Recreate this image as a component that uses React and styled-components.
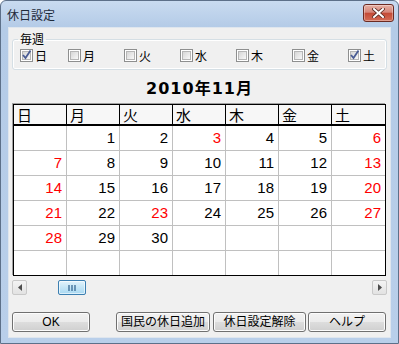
import React from 'react';
import styled, { createGlobalStyle } from 'styled-components';

const GlobalStyle = createGlobalStyle`
  html, body {
    margin: 0;
    padding: 0;
    background: #ffffff;
  }
  body {
    font-family: "Noto Sans CJK JP", sans-serif;
  }
`;

const Window = styled.div`
  box-sizing: border-box;
  width: 399px;
  height: 344px;
  display: flex;
  flex-direction: column;
  border: 1px solid #5d7089;
  border-radius: 6px 6px 0 0;
  background: linear-gradient(#c9dbf0, #b4cbe7 26px, #b9cfea);
  padding: 0 7px 5px 7px;
`;

const TitleBar = styled.div`
  height: 26px;
  margin: 0 -7px;
  padding: 3px 4px 0 6px;
  box-sizing: border-box;
  display: flex;
  justify-content: space-between;
  align-items: flex-start;
`;

const TitleText = styled.span`
  font-size: 12px;
  line-height: 16px;
  margin-top: 3px;
  color: #1e2a3a;
`;

const CloseButton = styled.div`
  width: 31px;
  height: 18px;
  box-sizing: border-box;
  border: 1px solid #6b2a22;
  border-radius: 3px;
  background: linear-gradient(#e6b0a3, #d6867a 45%, #c44a36 52%, #d46d57);
  box-shadow: inset 0 0 0 1px rgba(255, 255, 255, 0.35);
  display: flex;
  align-items: center;
  justify-content: center;
`;

const Client = styled.div`
  flex: 1;
  min-width: 0;
  display: flex;
  flex-direction: column;
  background: #f0f0f0;
  box-shadow: inset 0 0 0 1px #dfe6ee;
`;

const GroupBox = styled.fieldset`
  min-width: 0;
  margin: 5px 4px 0 4px;
  padding: 2px 0 6px 7px;
  border: 1px solid #d5dfe5;
  border-radius: 3px;
  box-shadow: inset 0 0 0 1px #ffffff;
`;

const GroupLabel = styled.legend`
  font-size: 12px;
  line-height: 14px;
  padding: 0 2px;
  margin-left: -2px;
  color: #000;
`;

const CheckRow = styled.div`
  display: flex;
  height: 15px;
  align-items: center;
`;

const CheckItem = styled.label`
  width: ${p => (p.$w ? `${p.$w}px` : 'auto')};
  display: flex;
  align-items: center;
  gap: 2px;
  font-size: 12px;
  line-height: 15px;
  color: #000;
`;

const Box = styled.span`
  width: 13px;
  height: 13px;
  box-sizing: border-box;
  border: 1px solid #8e8f8f;
  padding: 1px;
  background: #fff;
  display: flex;
`;

const BoxInner = styled.span`
  flex: 1;
  border: 1px solid #b6b6b6;
  background: linear-gradient(135deg, #d6d6d6, #f8f8f8);
  position: relative;
`;

const Tick = styled.svg`
  position: absolute;
  left: -2px;
  top: -3px;
`;

const MonthTitle = styled.div`
  margin-top: 9px;
  text-align: center;
  font-family: "DejaVu Sans", "Noto Sans CJK JP", sans-serif;
  font-weight: bold;
  font-size: 16px;
  line-height: 20px;
  letter-spacing: 1px;
  color: #000;
`;

const Grid = styled.div`
  margin: 5px 0 0 5px;
  width: 373px;
  box-sizing: border-box;
  border: 1px solid #000;
  box-shadow: -1px -1px 0 #a0a0a0;
  background: #fff;
  display: grid;
  grid-template-columns: repeat(6, 53px) 1fr;
`;

const HeadCell = styled.div`
  height: 21px;
  box-sizing: border-box;
  border-right: ${p => (p.$last ? 'none' : '1px solid #000')};
  border-bottom: 2px solid #000;
  background: #f7f7f7;
  padding-left: 3px;
  font-size: 15px;
  line-height: 19px;
  color: #000;
`;

const DayCell = styled.div`
  height: ${p => (p.$lastRow ? 24 : 25)}px;
  box-sizing: border-box;
  border-right: ${p => (p.$last ? 'none' : '1px solid #c0c0c0')};
  border-bottom: ${p => (p.$lastRow ? 'none' : '1px solid #c0c0c0')};
  text-align: right;
  padding-right: 4px;
  font-family: "Liberation Sans", sans-serif;
  font-size: 15px;
  line-height: 24px;
  color: ${p => (p.$red ? '#ff0000' : '#000')};
`;

const ScrollBar = styled.div`
  margin: 4px 0 0 4px;
  width: 375px;
  height: 15px;
  display: flex;
`;

const ArrowButton = styled.div`
  width: 15px;
  height: 15px;
  box-sizing: border-box;
  border: 1px solid #c9c9c9;
  border-radius: 2px;
  background: linear-gradient(#f4f4f4, #e2e2e2);
  display: flex;
  align-items: center;
  justify-content: center;
`;

const Track = styled.div`
  flex: 1;
  display: flex;
`;

const Thumb = styled.div`
  width: 28px;
  height: 15px;
  margin-left: ${p => p.$offset}px;
  box-sizing: border-box;
  border: 1px solid #3c7fb1;
  border-radius: 2px;
  background: linear-gradient(#e3f4fc, #c4e5f6 50%, #a9d9f2);
  box-shadow: inset 0 0 0 1px rgba(255, 255, 255, 0.6);
  display: flex;
  align-items: center;
  justify-content: center;
`;

const Footer = styled.div`
  margin: 17px 0 0 4px;
  display: flex;
`;

const Button = styled.button`
  width: ${p => p.$w}px;
  height: 20px;
  margin-left: ${p => p.$gap || 0}px;
  padding: 0;
  box-sizing: border-box;
  border: 1px solid #707070;
  border-radius: 3px;
  background: linear-gradient(#f2f2f2, #ebebeb 48%, #dddddd 52%, #cfcfcf);
  box-shadow: inset 0 0 0 1px #fcfcfc;
  font-family: "Liberation Sans", "Noto Sans CJK JP", sans-serif;
  font-size: 12px;
  line-height: 18px;
  color: #000;
`;

const weekdays = ['日', '月', '火', '水', '木', '金', '土'];
const checked = [true, false, false, false, false, false, true];
const holidays = [3, 23];

const cells = Array.from({ length: 42 }, (_, i) => (i >= 1 && i <= 30 ? i : null));

const Check = ({ on }) => (
  <Box>
    <BoxInner>
      {on && (
        <Tick width="11" height="11" viewBox="0 0 11 11">
          <path d="M2 6 L4.5 9 L9.5 1.5" fill="none" stroke="#4a5c94" strokeWidth="1.8" />
        </Tick>
      )}
    </BoxInner>
  </Box>
);

export default function App() {
  return (
    <>
      <GlobalStyle />
      <Window>
        <TitleBar>
          <TitleText>休日設定</TitleText>
          <CloseButton>
            <svg width="13" height="10" viewBox="0 0 13 10">
              <path d="M2 1 L11 9 M11 1 L2 9" stroke="#5a2a22" strokeWidth="3.6" strokeLinecap="square" />
              <path d="M2 1 L11 9 M11 1 L2 9" stroke="#ffffff" strokeWidth="2" strokeLinecap="square" />
            </svg>
          </CloseButton>
        </TitleBar>
        <Client>
          <GroupBox>
            <GroupLabel>毎週</GroupLabel>
            <CheckRow>
              {weekdays.map((d, i) => (
                <CheckItem key={d} $w={i === 0 ? 48 : i === 6 ? null : 56}>
                  <Check on={checked[i]} />
                  {d}
                </CheckItem>
              ))}
            </CheckRow>
          </GroupBox>
          <MonthTitle>2010年11月</MonthTitle>
          <Grid>
            {weekdays.map((d, i) => (
              <HeadCell key={d} $last={i === 6}>{d}</HeadCell>
            ))}
            {cells.map((day, i) => {
              const col = i % 7;
              const red = col === 0 || col === 6 || holidays.includes(day);
              return (
                <DayCell key={i} $last={col === 6} $lastRow={i >= 35} $red={red}>
                  {day || ''}
                </DayCell>
              );
            })}
          </Grid>
          <ScrollBar>
            <ArrowButton>
              <svg width="4" height="7" viewBox="0 0 4 7">
                <path d="M4 0 L0 3.5 L4 7 Z" fill="#4d4d4d" />
              </svg>
            </ArrowButton>
            <Track>
              <Thumb $offset={31}>
                <svg width="9" height="6" viewBox="0 0 9 6">
                  <path d="M1 0 V6 M4 0 V6 M7 0 V6" stroke="#2c5e8a" strokeWidth="1.2" />
                </svg>
              </Thumb>
            </Track>
            <ArrowButton>
              <svg width="4" height="7" viewBox="0 0 4 7">
                <path d="M0 0 L4 3.5 L0 7 Z" fill="#4d4d4d" />
              </svg>
            </ArrowButton>
          </ScrollBar>
          <Footer>
            <Button $w={78}>OK</Button>
            <Button $w={94} $gap={26}>国民の休日追加</Button>
            <Button $w={93} $gap={3}>休日設定解除</Button>
            <Button $w={78} $gap={2}>ヘルプ</Button>
          </Footer>
        </Client>
      </Window>
    </>
  );
}
